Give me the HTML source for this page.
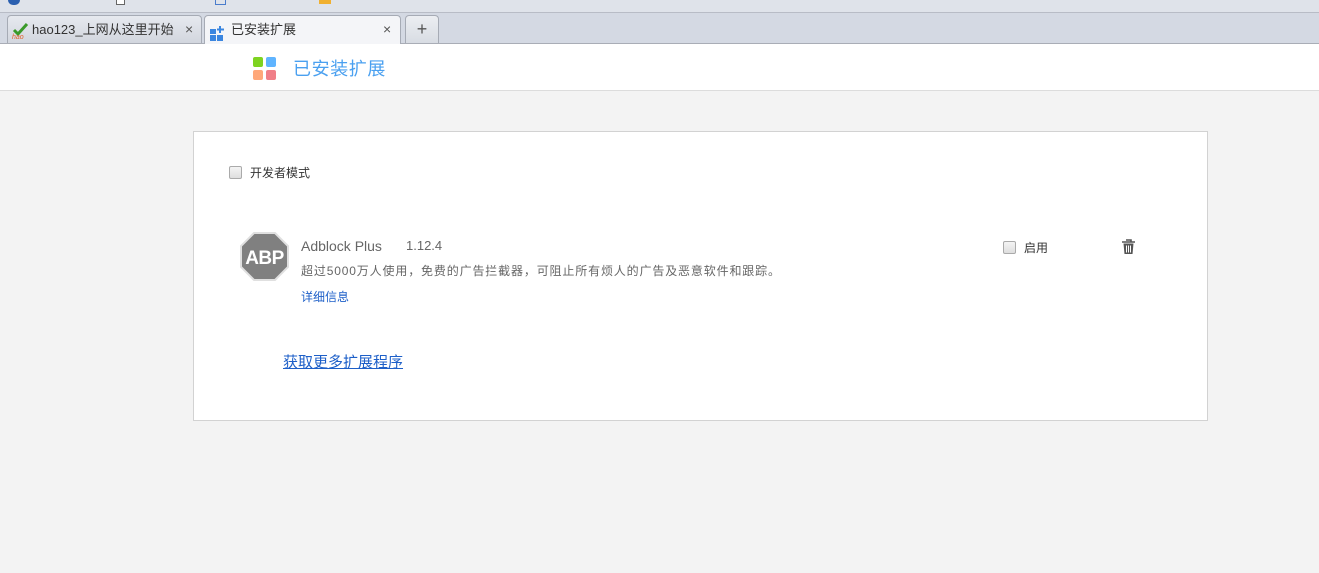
<!DOCTYPE html>
<html><head><meta charset="utf-8"><style>
*{margin:0;padding:0;box-sizing:border-box}
body{width:1319px;height:573px;overflow:hidden;background:#f3f3f3;font-family:"Liberation Sans","Noto Sans CJK SC",sans-serif;position:relative}
.abs{position:absolute}
.topbar{left:0;top:0;width:1319px;height:13px;background:#dfe3ea;border-bottom:1px solid #b8bcc6}
.tabbar{left:0;top:13px;width:1319px;height:31px;background:#d4d9e3;border-bottom:1px solid #a9adb6}
.tab{top:15px;height:28px;border:1px solid #a6abb5;border-bottom:none;border-radius:4px 4px 0 0;font-size:13px;color:#333;line-height:27px;white-space:nowrap}
.header{left:0;top:44px;width:1319px;height:47px;background:#fff;border-bottom:1px solid #dcdcdc}
.card{left:193px;top:131px;width:1015px;height:290px;background:#fff;border:1px solid #d2d2d2}
.cb{width:13px;height:13px;border:1px solid #aaa;border-radius:2px;background:linear-gradient(#f4f4f4,#dedede)}
</style></head><body>
<div class="abs topbar"></div>
<div class="abs" style="left:8px;top:0;width:12px;height:5px;background:#2a5fb0;border-radius:0 0 6px 6px"></div>
<div class="abs" style="left:116px;top:0;width:9px;height:5px;border:1px solid #666;border-top:none;background:#fff"></div>
<div class="abs" style="left:215px;top:0;width:11px;height:5px;border:1px solid #4a7ccc;border-top:none"></div>
<div class="abs" style="left:319px;top:0;width:12px;height:4px;background:#f0b030"></div>
<div class="abs tabbar"></div>
<div class="abs tab" style="left:7px;width:195px;background:linear-gradient(#e6e9ef,#d2d6de)">
 <span class="abs" style="left:4px;top:5px;width:17px;height:17px"><svg width="17" height="17"><path d="M2 8 L6 12 L15 2" stroke="#3a9a2a" stroke-width="3" fill="none"/><text x="0" y="17" font-size="7" fill="#e0602a" font-family="Liberation Sans" font-style="italic">hao</text></svg></span>
 <span class="abs" style="left:24px;top:0">hao123_上网从这里开始</span>
 <span class="abs" style="left:177px;top:0;color:#555;font-size:14px">×</span>
</div>
<div class="abs tab" style="left:204px;width:197px;background:#f4f5f8;height:29px">
 <span class="abs" style="left:5px;top:7px"><svg width="16" height="15"><rect x="0" y="3" width="6" height="5" fill="#3b86e0"/><rect x="0" y="9" width="6" height="6" fill="#3b86e0"/><rect x="7" y="9" width="6" height="6" fill="#3b86e0"/><path d="M10 0v7M7 3.5h7" stroke="#3b86e0" stroke-width="2"/></svg></span>
 <span class="abs" style="left:26px;top:0">已安装扩展</span>
 <span class="abs" style="left:178px;top:0;color:#555;font-size:14px">×</span>
</div>
<div class="abs tab" style="left:405px;width:34px;background:linear-gradient(#eceef2,#d8dce3);text-align:center;font-size:18px;color:#555;line-height:26px">+</div>
<div class="abs header">
 <div class="abs" style="left:253px;top:13px;width:10px;height:10px;background:#7ed321;border-radius:2px"></div>
 <div class="abs" style="left:266px;top:13px;width:10px;height:10px;background:#5fb4ff;border-radius:2px"></div>
 <div class="abs" style="left:253px;top:26px;width:10px;height:10px;background:#ffa87a;border-radius:2px"></div>
 <div class="abs" style="left:266px;top:26px;width:10px;height:10px;background:#f07f88;border-radius:2px"></div>
 <div class="abs" style="left:293px;top:13px;font-size:18px;color:#4aa0f0;line-height:24px;letter-spacing:0.6px">已安装扩展</div>
</div>
<div class="abs card"></div>
<div class="abs cb" style="left:229px;top:166px"></div>
<div class="abs" style="left:250px;top:164px;font-size:12px;color:#333">开发者模式</div>
<svg class="abs" style="left:240px;top:232px" width="49" height="49"><polygon points="14,1 35,1 48,14 48,35 35,48 14,48 1,35 1,14" fill="#808080" stroke="#e0e0e0" stroke-width="2"/><text x="24.5" y="32" font-size="19" font-weight="bold" fill="#fff" text-anchor="middle" font-family="Liberation Sans" letter-spacing="-0.5">ABP</text></svg>
<div class="abs" style="left:301px;top:238px;font-size:14px;color:#666">Adblock Plus</div>
<div class="abs" style="left:406px;top:238px;font-size:13px;color:#666">1.12.4</div>
<div class="abs" style="left:301px;top:262px;font-size:12px;color:#666;letter-spacing:0.85px;white-space:nowrap">超过5000万人使用，免费的广告拦截器，可阻止所有烦人的广告及恶意软件和跟踪。</div>
<div class="abs" style="left:301px;top:288px;font-size:12px;color:#1d5fc8">详细信息</div>
<div class="abs cb" style="left:1003px;top:241px"></div>
<div class="abs" style="left:1024px;top:239px;font-size:12px;color:#333">启用</div>
<svg class="abs" style="left:1121px;top:239px" width="15" height="16"><path d="M5 1h5v2M1 3h13" stroke="#555" stroke-width="1.6" fill="none"/><path d="M2.5 4.5h10l-1 10.5h-8z" fill="#555"/><path d="M5.5 6.5v7M7.5 6.5v7M9.5 6.5v7" stroke="#fff" stroke-width="1"/></svg>
<div class="abs" style="left:283px;top:351px;font-size:15px;color:#1d5fc8;text-decoration:underline">获取更多扩展程序</div>
</body></html>
